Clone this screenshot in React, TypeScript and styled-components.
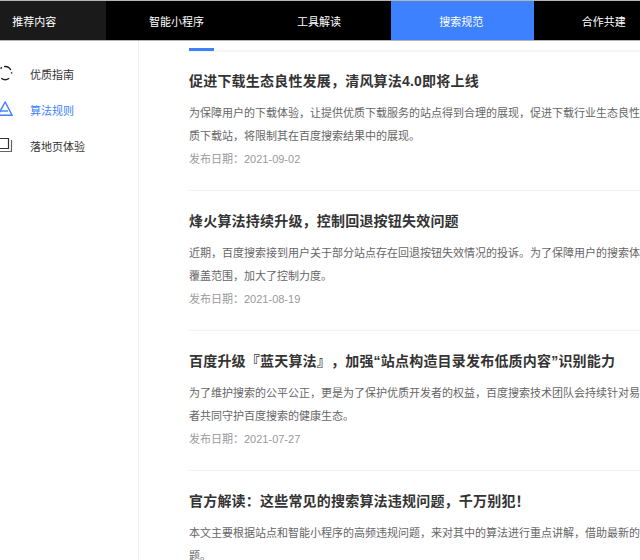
import React from "react";
import styled, { createGlobalStyle } from "styled-components";

const GlobalStyle = createGlobalStyle`
  html, body {
    margin: 0;
    padding: 0;
    height: 560px;
    overflow: hidden;
    background: #fff;
    font-family: "Liberation Sans", "Noto Sans CJK SC", sans-serif;
  }
`;

const Page = styled.div`
  width: 640px;
  height: 560px;
  overflow: hidden;
`;

const NavBar = styled.nav`
  display: flex;
  height: 39px;
  margin-left: -36px;
  background: #000;
  border-top: 1px solid #b5b5b5;
  border-bottom: 1px solid #b5b5b5;
`;

const NavTab = styled.div<{ $state?: "hover" | "active" }>`
  flex: 0 0 142.4px;
  box-sizing: border-box;
  padding-right: 2px;
  display: flex;
  align-items: center;
  justify-content: center;
  color: #fff;
  font-size: 11px;
  background: ${(p) =>
    p.$state === "active" ? "#3d81ff" : p.$state === "hover" ? "#1a1a1a" : "#000"};
`;

const Body = styled.div`
  display: flex;
  height: 519px;
`;

const Sidebar = styled.aside`
  flex: 0 0 139px;
  box-sizing: border-box;
  border-right: 1px solid #f0f0f0;
  padding-top: 15px;
  display: flex;
  flex-direction: column;
`;

const SideItem = styled.div<{ $active?: boolean }>`
  height: 36px;
  display: flex;
  align-items: center;
  gap: 17px;
  font-size: 11px;
  color: ${(p) => (p.$active ? "#3d81ff" : "#333")};
  svg {
    flex: 0 0 13px;
  }
`;

const Main = styled.main`
  flex: 1;
  min-width: 0;
  padding: 9px 0 0 50px;
  overflow: hidden;
`;

const TabRule = styled.div`
  position: relative;
  height: 2px;
  background: #f5f5f5;
  margin-bottom: 19px;
  &::before {
    content: "";
    position: absolute;
    left: 0;
    top: -2px;
    width: 25px;
    height: 3px;
    background: #3d81ff;
  }
`;

const Article = styled.article`
  height: 120px;
  box-sizing: border-box;
  border-bottom: 1px solid #f3f3f3;
  margin-bottom: 20px;
  &:last-child {
    border-bottom: 0;
  }
`;

const Title = styled.h2`
  margin: 0 0 11px;
  font-size: 14px;
  letter-spacing: 0.2px;
  line-height: 20px;
  font-weight: 700;
  color: #333;
  white-space: nowrap;
  text-spacing-trim: space-all;
`;

const Line = styled.p`
  margin: 0;
  font-size: 11px;
  line-height: 22.5px;
  color: #666;
  white-space: nowrap;
`;

const DateLine = styled.div`
  margin-top: 3px;
  font-size: 11px;
  line-height: 18px;
  color: #999;
`;

const articles = [
  {
    title: "促进下载生态良性发展，清风算法4.0即将上线",
    lines: [
      "为保障用户的下载体验，让提供优质下载服务的站点得到合理的展现，促进下载行业生态良性发展，对低",
      "质下载站，将限制其在百度搜索结果中的展现。",
    ],
    date: "发布日期：2021-09-02",
  },
  {
    title: "烽火算法持续升级，控制回退按钮失效问题",
    lines: [
      "近期，百度搜索接到用户关于部分站点存在回退按钮失效情况的投诉。为了保障用户的搜索体验，扩大了",
      "覆盖范围，加大了控制力度。",
    ],
    date: "发布日期：2021-08-19",
  },
  {
    title: "百度升级『蓝天算法』，加强“站点构造目录发布低质内容”识别能力",
    lines: [
      "为了维护搜索的公平公正，更是为了保护优质开发者的权益，百度搜索技术团队会持续针对易发问题与开发",
      "者共同守护百度搜索的健康生态。",
    ],
    date: "发布日期：2021-07-27",
  },
  {
    title: "官方解读：这些常见的搜索算法违规问题，千万别犯！",
    lines: [
      "本文主要根据站点和智能小程序的高频违规问题，来对其中的算法进行重点讲解，借助最新的案例解读问",
      "题。",
    ],
    date: "",
  },
];

const GuideIcon = () => (
  <svg width="13" height="18" viewBox="0 0 13 18" fill="none" stroke="#222" strokeWidth="1.4">
    <path d="M0.5 3.6A6.5 6.5 0 0 1 2 2.3" />
    <path d="M4 1.6A6.5 6.5 0 0 1 10.8 5" />
    <path d="M11.6 7.2V8.6" />
    <path d="M9.2 13.2A6.5 6.5 0 0 1 1.2 13.2" />
  </svg>
);

const RuleIcon = () => (
  <svg width="13" height="18" viewBox="0 0 13 18" fill="none" stroke="#3d81ff" strokeWidth="1.4">
    <path d="M5.2 1L12 14.2H-2Z" />
    <path d="M0 10H8" />
  </svg>
);

const LandingIcon = () => (
  <svg width="13" height="18" viewBox="0 0 13 18" fill="none" stroke="#333" strokeWidth="1.2">
    <path d="M-1 1.5H8.5V11.5H-1" />
    <path d="M11.5 3V14.5H-1" stroke="#666" />
  </svg>
);

export default function App() {
  return (
    <Page>
      <GlobalStyle />
      <NavBar>
        <NavTab $state="hover">推荐内容</NavTab>
        <NavTab>智能小程序</NavTab>
        <NavTab>工具解读</NavTab>
        <NavTab $state="active">搜索规范</NavTab>
        <NavTab>合作共建</NavTab>
      </NavBar>
      <Body>
        <Sidebar>
          <SideItem>
            <GuideIcon />
            优质指南
          </SideItem>
          <SideItem $active>
            <RuleIcon />
            算法规则
          </SideItem>
          <SideItem>
            <LandingIcon />
            落地页体验
          </SideItem>
        </Sidebar>
        <Main>
          <TabRule />
          {articles.map((a) => (
            <Article key={a.title}>
              <Title>{a.title}</Title>
              {a.lines.map((l) => (
                <Line key={l}>{l}</Line>
              ))}
              {a.date && <DateLine>{a.date}</DateLine>}
            </Article>
          ))}
        </Main>
      </Body>
    </Page>
  );
}
